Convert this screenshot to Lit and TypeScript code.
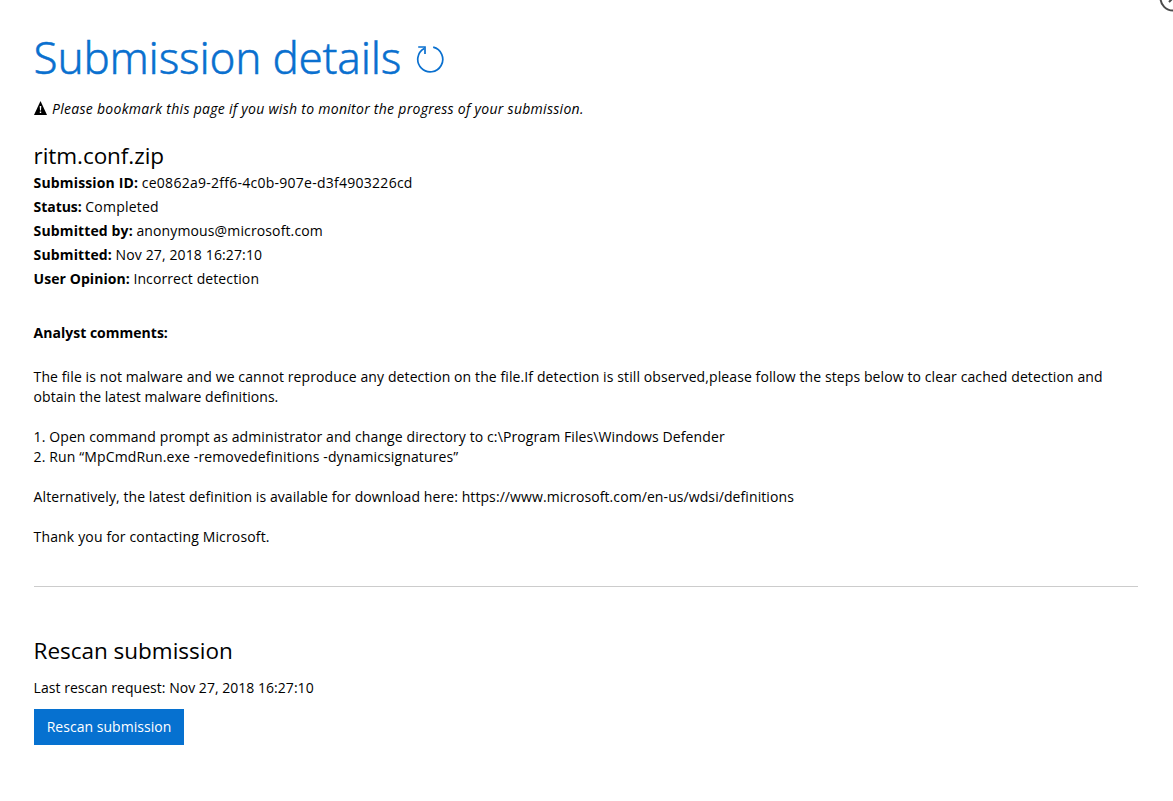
import { LitElement, html, css } from "lit";
import { customElement } from "lit/decorators.js";

interface Field {
  label: string;
  value: string;
  cls: string;
}

const fields: Field[] = [
  { label: "Submission ID:", value: "ce0862a9-2ff6-4c0b-907e-d3f4903226cd", cls: "f-id" },
  { label: "Status:", value: "Completed", cls: "f-status" },
  { label: "Submitted by:", value: "anonymous@microsoft.com", cls: "f-by" },
  { label: "Submitted:", value: "Nov 27, 2018 16:27:10", cls: "f-date" },
  { label: "User Opinion:", value: "Incorrect detection", cls: "f-opinion" },
];

@customElement("app-root")
export class AppRoot extends LitElement {
  static styles = css`
    :host {
      display: block;
      position: relative;
      box-sizing: border-box;
      height: 801px;
      padding: 27px 35px 0 33.6px;
      overflow: hidden;
      background: #fff;
      color: #000;
      font-family: "Open Sans", "Noto Sans", sans-serif;
      font-size: 14px;
      line-height: 20px;
    }
    h1, h2, p, dl, dt, dd { margin: 0; font-weight: 400; white-space: nowrap; }
    .corner { position: absolute; top: -16px; right: -14px; display: block; }
    .title {
      display: flex;
      align-items: center;
      height: 60px;
      color: #0a70cf;
      font-family: "Noto Sans", sans-serif;
      font-size: 44px;
      font-weight: 300;
      line-height: 60px;
      letter-spacing: -0.23px;
      -webkit-text-stroke: 0.45px #0a70cf;
    }
    .refresh { margin: 4px 0 0 13.7px; }
    .notice { display: flex; align-items: center; margin-top: 12px; height: 20px; font-style: italic; letter-spacing: 0.285px; }
    .notice svg { margin: -3px 5px 0 0.4px; }
    h2 { font-size: 22.5px; line-height: 30px; }
    .file { margin-top: 22px; letter-spacing: -0.06px; }
    .row { display: flex; gap: 3.6px; height: 24px; line-height: 24px; }
    dt, .analyst { font-weight: 700; }
    .f-id dt { letter-spacing: 0.15px; }
    .f-id dd { letter-spacing: 0.26px; }
    .f-status dt { letter-spacing: -0.05px; }
    .f-status dd { letter-spacing: 0.22px; }
    .f-by dt, .f-date dt { letter-spacing: 0.13px; }
    .f-by dd { letter-spacing: 0.13px; }
    .f-date dd { letter-spacing: 0.13px; }
    .f-opinion dt { letter-spacing: 0.06px; }
    .f-opinion dd { letter-spacing: 0.1px; }
    .analyst { margin-top: 32px; letter-spacing: 0.01px; }
    .para { margin-top: 20px; }
    .analyst + .para { margin-top: 24px; }
    .body { letter-spacing: 0.103px; }
    .link { letter-spacing: 0.087px; }
    .tail { letter-spacing: 0.05px; }
    .step { letter-spacing: 0.135px; }
    .thanks { letter-spacing: 0.15px; }
    .rule { margin: 39px 0 0 0.4px; border-top: 1px solid #ccc; }
    .rescan { margin-top: 49px; letter-spacing: -0.02px; }
    .last { margin-top: 12px; letter-spacing: 0.03px; }
    button {
      display: block;
      width: 150px;
      height: 36px;
      margin: 11px 0 0 0.4px;
      padding: 0;
      border: 0;
      background: #0671d0;
      color: #fff;
      font: inherit;
      letter-spacing: 0.03px;
    }
  `;

  render() {
    return html`
      <svg class="corner" width="28" height="28" viewBox="0 0 28 28" fill="none" stroke="#4a4a4a" stroke-width="2">
        <circle cx="14" cy="14" r="12.5" />
        <path d="M10 18l8-8M10 10l8 8" />
      </svg>
      <h1 class="title">
        <span>Submission details</span>
        <svg class="refresh" width="30" height="30" viewBox="0 0 30 30" fill="none" stroke="#0a70cf" stroke-width="1.7">
          <path d="M18.2 3.2A12.5 12.5 0 1 1 9.2 4.4" />
          <path d="M3.2 3H10v7" />
        </svg>
      </h1>
      <p class="notice">
        <svg width="13" height="14" viewBox="0 0 13 14">
          <path d="M6.5 0L13 14H0z" fill="#000" />
          <path d="M5.7 5h1.6l-.3 4.6h-1zM5.8 10.6h1.4v1.5H5.8z" fill="#fff" />
        </svg>
        <span>Please bookmark this page if you wish to monitor the progress of your submission.</span>
      </p>
      <h2 class="file">ritm.conf.zip</h2>
      <dl>
        ${fields.map((f) => html`<div class="row ${f.cls}"><dt>${f.label}</dt><dd>${f.value}</dd></div>`)}
      </dl>
      <p class="analyst">Analyst comments:</p>
      <p class="para body">The file is not malware and we cannot reproduce any detection on the file.If detection is still observed,please follow the steps below to clear cached detection and</p>
      <p class="tail">obtain the latest malware definitions.</p>
      <p class="para body">1. Open command prompt as administrator and change directory to c:\\Program Files\\Windows Defender</p>
      <p class="step">2. Run “MpCmdRun.exe -removedefinitions -dynamicsignatures”</p>
      <p class="para link">Alternatively, the latest definition is available for download here: https://www.microsoft.com/en-us/wdsi/definitions</p>
      <p class="para thanks">Thank you for contacting Microsoft.</p>
      <div class="rule"></div>
      <h2 class="rescan">Rescan submission</h2>
      <p class="last">Last rescan request: Nov 27, 2018 16:27:10</p>
      <button>Rescan submission</button>
    `;
  }
}
